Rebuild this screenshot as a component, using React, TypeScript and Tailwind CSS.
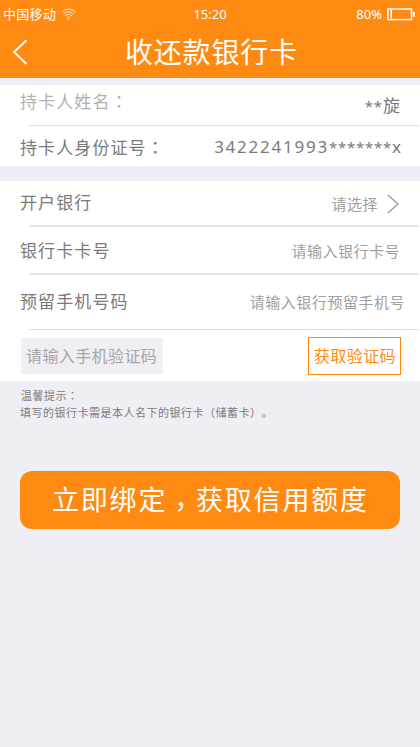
import type { ReactNode } from 'react'

const ORANGE_BTN = 'bg-[#ff8a12] text-white'

// Full-width punctuation centred in its cell
function Colon() {
  return <span className="font-['Noto_Sans_CJK_TC',sans-serif]">：</span>
}

function WifiIcon() {
  return (
    <svg className="ml-[5px] h-[13px] w-[15px]" viewBox="0 0 15 13" fill="none" stroke="#fff" strokeOpacity="0.85" strokeWidth="1">
      <path d="M0.5 4.2C4.5 0 10.5 0 14.5 4.2" />
      <path d="M2.3 6.1C5.3 3.1 9.7 3.1 12.7 6.1" />
      <path d="M4 8C6.1 5.9 8.9 5.9 11 8" />
      <path d="M5.7 9.8C6.8 8.8 8.2 8.8 9.3 9.8" />
      <circle cx="7.5" cy="11.4" r="0.8" fill="#fff" stroke="none" />
    </svg>
  )
}

function BatteryIcon() {
  return (
    <svg className="ml-[5px] h-[13px] w-[28px]" viewBox="0 0 28 13" fill="none">
      <rect x="0.9" y="1" width="23.6" height="10.6" stroke="#fff" strokeWidth="1.5" />
      <rect x="3.4" y="2" width="1.6" height="8.6" fill="#fff" />
      <rect x="25.8" y="4" width="2" height="4.8" fill="#fff" />
    </svg>
  )
}

function Row({ label, children, className }: { label: ReactNode; children: ReactNode; className: string }) {
  return (
    <div className={`flex items-start justify-between pl-[20px] text-[17px] leading-[24px] tracking-[1.1px] ${className}`}>
      <span>{label}</span>
      {children}
    </div>
  )
}

function Divider({ className = 'h-px' }: { className?: string }) {
  return <div className={`mr-px ml-[29px] bg-[#dfdfe1] ${className}`} />
}

export default function App() {
  return (
    <div className="h-[747px] w-[420px] overflow-hidden bg-[#efeef4] font-['Noto_Sans','Noto_Sans_CJK_SC',sans-serif] text-[#7a7a7a] [text-spacing-trim:space-all]">
      <header className="h-[78px] bg-[#ff8a12] text-white">
        <div className="grid h-[28px] grid-cols-[1fr_auto_1fr] items-center text-[13px] leading-[20px]">
          <div className="flex items-center pl-[3px]">
            <span className="tracking-[0.3px]">中国移动</span>
            <WifiIcon />
          </div>
          <span>15:20</span>
          <div className="flex items-center justify-end pr-[5px]">
            <span>80%</span>
            <BatteryIcon />
          </div>
        </div>
        <div className="grid h-[48px] grid-cols-[125px_1fr_120px] items-center">
          <svg className="ml-[12px] h-[26px] w-[16px]" viewBox="0 0 16 26" fill="none" stroke="#fff" strokeWidth="2">
            <path d="M14.5 1.2L2 13L14.5 25" />
          </svg>
          <h1 className="text-[28px] leading-[40px] tracking-[0.8px] whitespace-nowrap">收还款银行卡</h1>
        </div>
      </header>

      <section className="mt-[7px] h-[81px] bg-white">
        <Row label={<span className="text-[#b0b0b0]">持卡人姓名<Colon /></span>} className="h-[40px] pt-[4px] pr-[20px]">
          <span className="pt-[5px] tracking-[0.1px]">
            <span className="text-[15px] tracking-[0.8px]">**</span>旋
          </span>
        </Row>
        <Divider />
        <Row label={<>持卡人身份证号<Colon /></>} className="pt-[9px] pr-[19px]">
          <span className="tracking-[1.75px]">
            3422241993<span className="text-[15px] tracking-[0.75px]">*******</span><span className="tracking-normal">x</span>
          </span>
        </Row>
      </section>

      <section className="mt-[15px] h-[200px] bg-white">
        <Row label="开户银行" className="h-[44px] pt-[10px] pr-[21px]">
          <span className="flex h-[25px] items-center text-[15px] tracking-[0.5px] text-[#a0a0a0]">
            请选择
            <svg className="ml-[9px] h-[20px] w-[12px]" viewBox="0 0 12 20" fill="none" stroke="#999" strokeWidth="1.3">
              <path d="M0.8 1L11 10L0.8 19" />
            </svg>
          </span>
        </Row>
        <Divider className="h-[2px] bg-[#e6e6e8]" />
        <Row label="银行卡卡号" className="h-[46px] pt-[12px] pr-[20px]">
          <span className="text-[15px] tracking-[0.5px] text-[#a0a0a0]">请输入银行卡号</span>
        </Row>
        <Divider className="h-[2px] bg-[#e6e6e8]" />
        <Row label="预留手机号码" className="h-[54px] pt-[15px] pr-[15px]">
          <span className="text-[15px] tracking-[0.52px] text-[#a0a0a0]">请输入银行预留手机号</span>
        </Row>
        <Divider />
        <div className="flex justify-between pt-[7px] pr-[19px] pl-[21px] text-[16px] leading-[24px] tracking-[0.4px]">
          <div className="mt-px h-[36px] w-[142px] bg-[#efeef4] pt-[6px] pl-[5px] text-[#a6a6a8]">请输入手机验证码</div>
          <button className="h-[38px] w-[93px] border border-[#ff8a12] pl-[5px] text-left tracking-[0.4px] text-[#ff8a12]">
            获取验证码
          </button>
        </div>
      </section>

      <div className="pt-[6px] pl-[20px] text-[11px] leading-[17px] tracking-[0.5px] text-[#7c7c7c]">
        <p className="pl-px">温馨提示<Colon /></p>
        <p>填写的银行卡需是本人名下的银行卡（储蓄卡）。</p>
      </div>

      <button className={`mt-[50px] ml-[20px] flex h-[58px] w-[380px] items-center rounded-[12px] pl-[32px] text-[27px] tracking-[1.8px] whitespace-nowrap ${ORANGE_BTN}`}>
        立即绑定<span className="pt-[13px] font-['Noto_Sans_CJK_TC',sans-serif]">，</span>获取信用额度
      </button>
    </div>
  )
}
